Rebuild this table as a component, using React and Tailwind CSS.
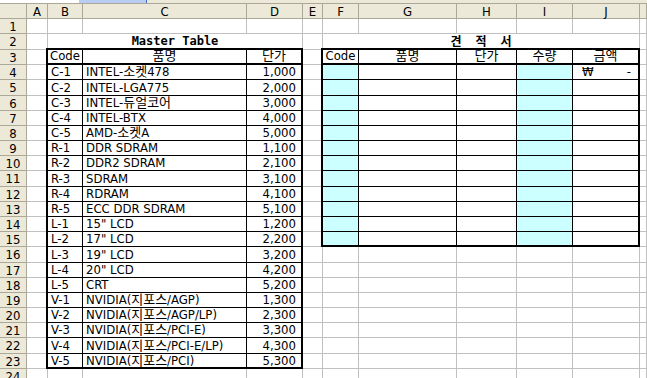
import React from "react";

const FONT = "font-['Liberation_Sans_Narrow','DejaVu_Sans_Condensed','Noto_Sans_CJK_KR',sans-serif]";

const COLS = ["A", "B", "C", "D", "E", "F", "G", "H", "I", "J", "K"];

const master = [
  ["C-1", "INTEL-소켓478", "1,000"],
  ["C-2", "INTEL-LGA775", "2,000"],
  ["C-3", "INTEL-듀얼코어", "3,000"],
  ["C-4", "INTEL-BTX", "4,000"],
  ["C-5", "AMD-소켓A", "5,000"],
  ["R-1", "DDR SDRAM", "1,100"],
  ["R-2", "DDR2 SDRAM", "2,100"],
  ["R-3", "SDRAM", "3,100"],
  ["R-4", "RDRAM", "4,100"],
  ["R-5", "ECC DDR SDRAM", "5,100"],
  ["L-1", '15" LCD', "1,200"],
  ["L-2", '17" LCD', "2,200"],
  ["L-3", '19" LCD', "3,200"],
  ["L-4", '20" LCD', "4,200"],
  ["L-5", "CRT", "5,200"],
  ["V-1", "NVIDIA(지포스/AGP)", "1,300"],
  ["V-2", "NVIDIA(지포스/AGP/LP)", "2,300"],
  ["V-3", "NVIDIA(지포스/PCI-E)", "3,300"],
  ["V-4", "NVIDIA(지포스/PCI-E/LP)", "4,300"],
  ["V-5", "NVIDIA(지포스/PCI)", "5,300"],
];

const grid = "border-r border-b border-[#C0C0C0] bg-white";
const head = "flex items-center justify-center bg-[#ECE9D8] border-r border-b border-[#ACA899] text-[13px] leading-none text-black";
const txt = "flex items-end whitespace-pre leading-none text-[13px] pb-[1px]";

// which spreadsheet columns are free (not under a table) for a given row
const freeCols = (r) => {
  if (r >= 3 && r <= 15) return ["A", "E", "K"];
  if (r >= 16 && r <= 23) return ["A", "E", "F", "G", "H", "I", "J", "K"];
  return COLS;
};

function MasterTable() {
  return (
    <div className="col-start-3 col-end-6 row-start-4 row-end-25 -ml-[2px] -mt-[2px] border-2 border-black bg-white grid grid-cols-[35px_164px_1fr] grid-rows-[15px_15px_16px_15px_15px_15px_15px_15px_16px_15px_15px_15px_15px_16px_15px_15px_15px_15px_15px_16px_1fr]">
      <div className={`${txt} justify-center border-r border-b-2 border-black`}>Code</div>
      <div className={`${txt} justify-center border-r border-b-2 border-black`}>품명</div>
      <div className={`${txt} justify-center border-b-2 border-black`}>단가</div>
      {master.map(([code, name, price], i) => {
        const last = i === master.length - 1;
        return (
          <React.Fragment key={code}>
            <div className={`${txt} pl-[3px] border-r border-black ${last ? "" : "border-b"}`}>{code}</div>
            <div className={`${txt} pl-[3px] border-r border-black ${last ? "" : "border-b"}`}>{name}</div>
            <div className={`${txt} justify-end pr-[5px] border-black ${last ? "" : "border-b"}`}>{price}</div>
          </React.Fragment>
        );
      })}
    </div>
  );
}

function QuoteTable() {
  const rows = Array.from({ length: 12 }, (_, i) => i);
  return (
    <div className="col-start-7 col-end-12 row-start-4 row-end-17 -ml-[2px] -mt-[2px] border-2 border-black bg-white grid grid-cols-[36px_98px_60px_56px_1fr] grid-rows-[15px_15px_16px_15px_15px_15px_15px_15px_16px_15px_15px_15px_1fr]">
      <div className={`${txt} justify-center border-r border-b-2 border-black`}>Code</div>
      <div className={`${txt} justify-center border-r border-b-2 border-black`}>품명</div>
      <div className={`${txt} justify-center border-r border-b-2 border-black`}>단가</div>
      <div className={`${txt} justify-center border-r border-b-2 border-black`}>수량</div>
      <div className={`${txt} justify-center border-b-2 border-black`}>금액</div>
      {rows.map((i) => {
        const b = i === rows.length - 1 ? "" : "border-b";
        return (
          <React.Fragment key={i}>
            <div className={`bg-[#CCFFFF] border-r border-black ${b}`} />
            <div className={`border-r border-black ${b}`} />
            <div className={`border-r border-black ${b}`} />
            <div className={`bg-[#CCFFFF] border-r border-black ${b}`} />
            <div className={`${txt} justify-between pl-[9px] pr-[7px] border-black ${b}`}>
              {i === 0 ? (
                <>
                  <span>₩</span>
                  <span>-</span>
                </>
              ) : null}
            </div>
          </React.Fragment>
        );
      })}
    </div>
  );
}

export default function App() {
  const rowNums = Array.from({ length: 24 }, (_, i) => i + 1);

  return (
    <div className={`w-[647px] h-[378px] overflow-hidden bg-white text-black ${FONT}`}>
      {/* bottom edge of the formula bar */}
      <div className="flex h-[3px] bg-[#ECE9D8]">
        <div className="w-[79px] bg-white" />
        <div className="w-[67px] bg-[#B9CDF2]" />
        <div className="w-[1px] bg-[#3D6CC0]" />
      </div>

      <div className="grid grid-cols-[27px_21px_35px_164px_56px_20px_36px_98px_60px_56px_67px_1fr] grid-rows-[16px_15px_16px_15px_15px_16px_15px_15px_15px_15px_15px_16px_15px_15px_15px_15px_16px_15px_15px_15px_15px_15px_16px_15px_16px]">
        {/* column headers */}
        <div className={`${head} border-t`} />
        {COLS.map((c) => (
          <div key={c} className={`${head} border-t`}>
            {c === "K" ? "" : c}
          </div>
        ))}

        {rowNums.map((r) => (
          <React.Fragment key={r}>
            <div className={head}>{r}</div>
            {r === 2 ? (
              <>
                <div className={grid} />
                <div className="col-span-3 flex items-end justify-center pb-[3px] border-r border-[#C0C0C0] bg-white font-['DejaVu_Sans_Mono',monospace] font-bold text-[12px] leading-none">
                  Master Table
                </div>
                <div className={grid} />
                <div className="col-span-5 flex items-end justify-center gap-[14px] pb-[3px] border-r border-[#C0C0C0] bg-white font-['Noto_Sans_CJK_KR',sans-serif] font-bold text-[12px] leading-none">
                  <span>견</span>
                  <span>적</span>
                  <span>서</span>
                </div>
                <div className={grid} />
              </>
            ) : (
              freeCols(r).map((c) => <div key={c} className={grid} />)
            )}
          </React.Fragment>
        ))}

        <MasterTable />
        <QuoteTable />
      </div>
    </div>
  );
}
